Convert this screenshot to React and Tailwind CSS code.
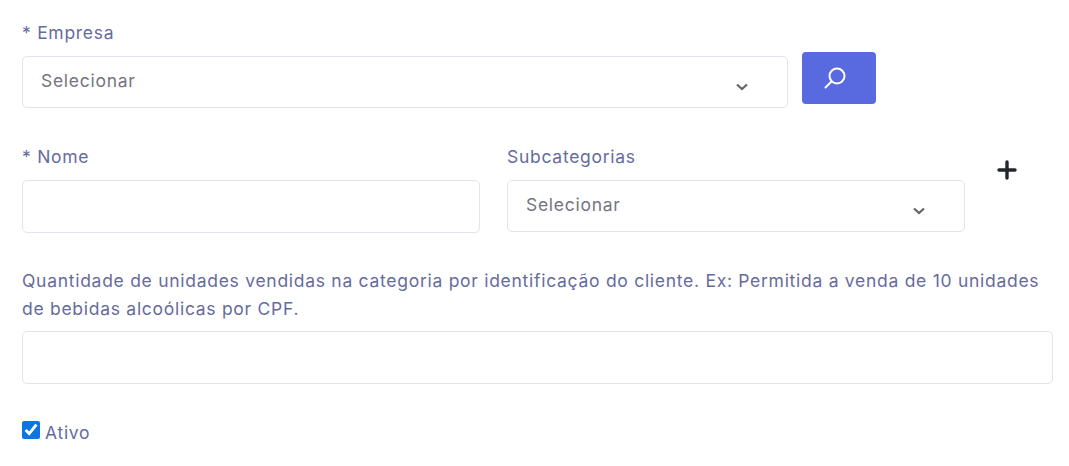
const font = "font-['Inter','Liberation_Sans',sans-serif]";

const Label = ({ children }) => (
  <label className="block text-[17.5px] tracking-[0.72px] leading-[28px] text-[#666b9e]">{children}</label>
);

const SelectBox = ({ className }) => (
  <div className={`h-[52px] rounded-[5px] border border-[#e2e3ec] bg-white flex items-center justify-between pl-[18px] pr-[38px] ${className}`}>
    <span className="text-[17.5px] tracking-[0.72px] text-[#74757e] mb-[1px]">Selecionar</span>
    <svg width="14" height="10" viewBox="0 0 14 10" fill="none" className="mt-[10px]">
      <path d="M2 2.5 L7 7 L12 2.5" stroke="#63646c" strokeWidth="2.2" />
    </svg>
  </div>
);

const App = () => {
  return (
    <div className={`w-[1069px] h-[466px] bg-white pl-[22px] pr-4 pt-[19px] overflow-hidden ${font}`}>
      <Label>* Empresa</Label>
      <div className="flex gap-[14px] items-start">
        <SelectBox className="w-[766px] mt-[9px]" />
        <button className="w-[74px] h-[52px] mt-[5px] rounded-[4px] bg-[#5969df] flex items-center justify-center">
          <svg width="24" height="24" viewBox="0 0 24 24" fill="none" stroke="white" strokeWidth="2" strokeLinecap="round" className="mr-[8px] mb-[1px]">
            <circle cx="14" cy="10" r="7.5" />
            <path d="M8.5 15.5 L2.5 21.5" />
          </svg>
        </button>
      </div>
      <div className="flex gap-[27px] mt-[35px]">
        <div className="w-[458px]">
          <Label>* Nome</Label>
          <input className="block w-full h-[53px] mt-[9px] rounded-[5px] border border-[#e2e3ec] bg-white" />
        </div>
        <div className="w-[458px]">
          <Label>Subcategorias</Label>
          <SelectBox className="mt-[9px]" />
        </div>
        <div className="ml-[5px] mt-[17px]">
          <svg width="20" height="20" viewBox="0 0 20 20" fill="none" stroke="#23252c" strokeWidth="3.4" strokeLinecap="round">
            <path d="M10 2 V18 M2 10 H18" />
          </svg>
        </div>
      </div>
      <div className="mt-[34px] w-[1031px]">
        <Label>Quantidade de unidades vendidas na categoria por identificação do cliente. Ex: Permitida a venda de 10 unidades de bebidas alcoólicas por CPF.</Label>
        <input className="block w-full h-[53px] mt-[8px] rounded-[5px] border border-[#e2e3ec] bg-white" />
      </div>
      <div className="flex items-start gap-[5px] mt-[35px]">
        <input type="checkbox" defaultChecked className="w-[18px] h-[18px] accent-[#0b76e0] m-0 mt-[2px]" />
        <span className="text-[17.5px] tracking-[0.72px] leading-[28px] text-[#666b9e]">Ativo</span>
      </div>
    </div>
  );
};

export default App;
